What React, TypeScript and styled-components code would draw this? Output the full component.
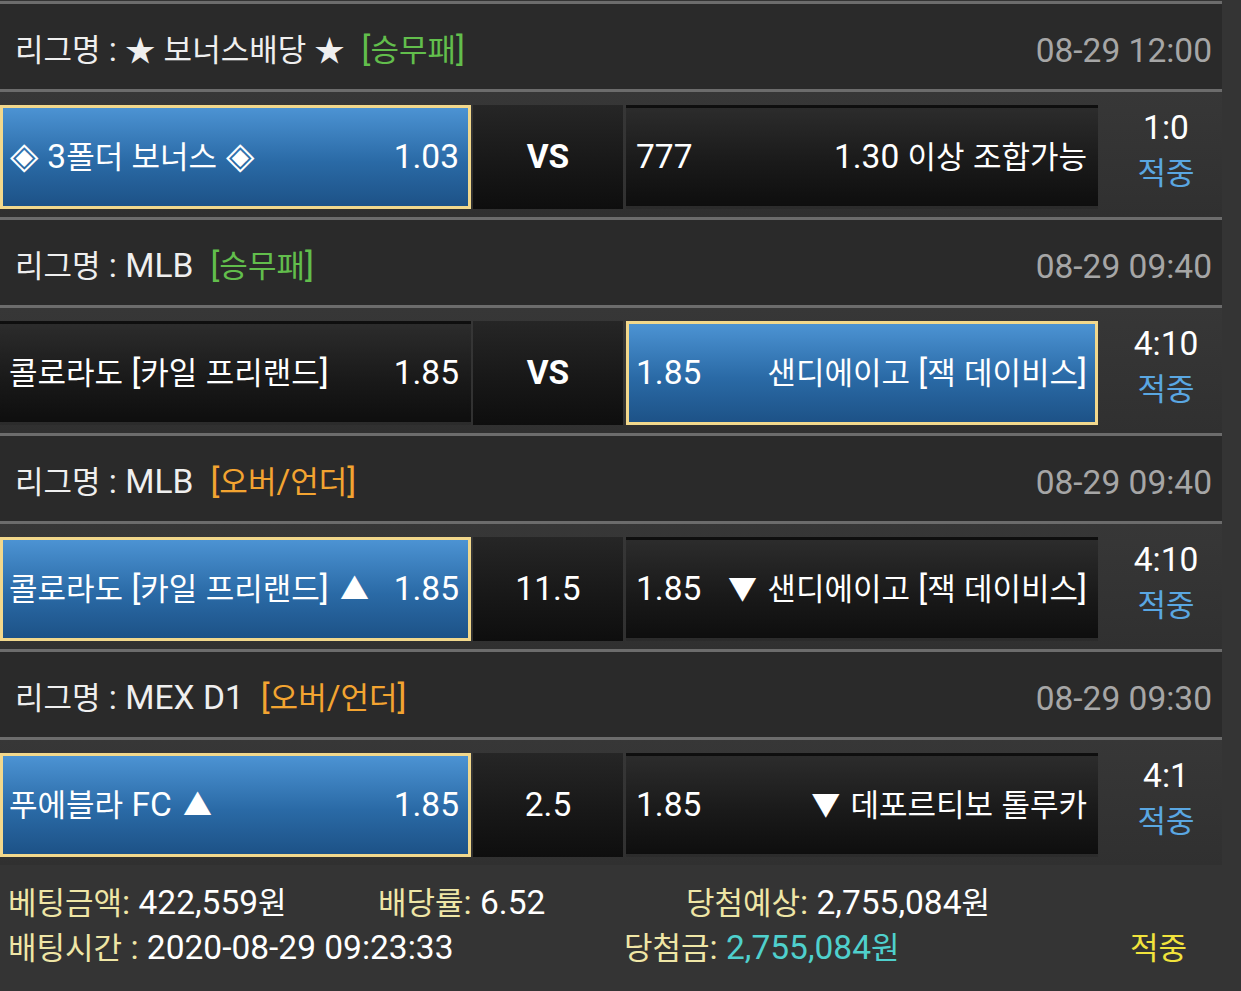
import React from "react";
import styled, { createGlobalStyle, css } from "styled-components";

const GlobalStyle = createGlobalStyle`
  html, body {
    margin: 0;
    padding: 0;
    background: #343434;
  }
  body {
    font-family: Roboto, "Noto Sans CJK KR", "Noto Sans", sans-serif;
    color: #f2f2f2;
  }
`;

const Page = styled.div`
  width: 1241px;
  min-height: 991px;
  padding-top: 1px;
  box-sizing: border-box;
  background: #343434;
`;

const List = styled.div`
  width: 1222px;
`;

const Divider = styled.div`
  height: 3px;
  background: #6c6c6c;
`;

/* Korean runs are set slightly smaller than the Latin / digit runs */
const Kr = styled.span`
  font-size: 31px;
`;

const Sym = styled.span<{ $size: number; $gap: number }>`
  font-size: ${(p) => p.$size}px;
  margin: 0 ${(p) => p.$gap}px;
`;

const symStyle: Record<string, { size: number; gap: number }> = {
  "◈": { size: 37, gap: 1 },
  "▲": { size: 29, gap: 3 },
  "▼": { size: 29, gap: 2 },
  "★": { size: 30, gap: 0 },
};

function Txt({ children }: { children: string }) {
  const parts = children
    .split(/([\uAC00-\uD7A3\u3131-\u318E]+|[◈▲▼★])/)
    .filter((p) => p !== "");
  return (
    <>
      {parts.map((p, i) => {
        if (/[\uAC00-\uD7A3\u3131-\u318E]/.test(p)) return <Kr key={i}>{p}</Kr>;
        const s = symStyle[p];
        if (s)
          return (
            <Sym key={i} $size={s.size} $gap={s.gap}>
              {p}
            </Sym>
          );
        return <React.Fragment key={i}>{p}</React.Fragment>;
      })}
    </>
  );
}

const LeagueHeader = styled.div`
  height: 85px;
  box-sizing: border-box;
  padding: 8px 10px 0 15px;
  background: #2a2a2a;
  display: flex;
  align-items: center;
  justify-content: space-between;
  font-size: 33.5px;
  line-height: 40px;
  color: #efefef;
  white-space: nowrap;
`;

const LeagueName = styled.span``;

const Market = styled.span<{ $tone: "green" | "orange" }>`
  margin-left: 17px;
  color: ${(p) => (p.$tone === "green" ? "#62be4c" : "#f3a431")};
`;

const Time = styled.span`
  color: #a6a6a6;
`;

const BetRow = styled.div`
  height: 125px;
  box-sizing: border-box;
  padding-top: 13px;
  display: flex;
  align-items: flex-start;
  background: linear-gradient(#373737, #303030);
`;

const cellBase = css`
  height: 104px;
  box-sizing: border-box;
  display: flex;
  align-items: center;
  font-size: 33.5px;
  line-height: 40px;
  color: #ffffff;
  white-space: nowrap;
`;

const Pick = styled.div<{ $selected?: boolean }>`
  ${cellBase};
  width: 471px;
  justify-content: space-between;
  padding: 0 8px 0 9px;
  border: 3px solid ${(p) => (p.$selected ? "#f2d88c" : "transparent")};
  background: ${(p) =>
    p.$selected
      ? "linear-gradient(#4c93d3, #2a6aa6 55%, #1d5287)"
      : "linear-gradient(#2c2c2c, #1a1a1a 55%, #0e0e0e)"};
`;

const HomePick = styled(Pick)`
  padding: 0 9px 0 6px;
`;

const AwayPick = styled(Pick)`
  width: 472px;
  padding: 0 8px 0 7px;
`;

const Middle = styled.div<{ $bold?: boolean }>`
  ${cellBase};
  width: 150px;
  margin: 0 3px 0 2px;
  justify-content: center;
  background: linear-gradient(#262626, #181818 55%, #0e0e0e);
  font-weight: ${(p) => (p.$bold ? 700 : 400)};
`;

const Result = styled.div`
  flex: 1;
  padding-left: 12px;
  display: flex;
  flex-direction: column;
  align-items: center;
  font-size: 33.5px;
  line-height: 45px;
`;

const Score = styled.span`
  color: #ffffff;
`;

const Hit = styled.span`
  color: #5aa7e2;
`;

const Summary = styled.div`
  padding: 16px 0 0 8px;
  font-size: 33.5px;
  line-height: 44px;
  white-space: nowrap;
`;

const SummaryLine = styled.div`
  display: flex;
`;

const SummaryItem = styled.div<{ $w?: number }>`
  ${(p) => (p.$w ? `width: ${p.$w}px;` : "")}
  flex-shrink: 0;
`;

const Label = styled.span`
  color: #efe6a6;
`;

const Value = styled.span<{ $tone?: "white" | "cyan" }>`
  color: ${(p) => (p.$tone === "cyan" ? "#4fd0cd" : "#ffffff")};
`;

const Status = styled.span`
  color: #f1e33c;
`;

type Bet = {
  league: string;
  market: string;
  tone: "green" | "orange";
  time: string;
  home: string;
  homeOdds: string;
  mid: string;
  midBold?: boolean;
  awayOdds: string;
  away: string;
  pick: "home" | "away";
  score: string;
};

const bets: Bet[] = [
  {
    league: "리그명 : ★ 보너스배당 ★",
    market: "[승무패]",
    tone: "green",
    time: "08-29 12:00",
    home: "◈ 3폴더 보너스 ◈",
    homeOdds: "1.03",
    mid: "VS",
    midBold: true,
    awayOdds: "777",
    away: "1.30 이상 조합가능",
    pick: "home",
    score: "1:0",
  },
  {
    league: "리그명 : MLB",
    market: "[승무패]",
    tone: "green",
    time: "08-29 09:40",
    home: "콜로라도 [카일 프리랜드]",
    homeOdds: "1.85",
    mid: "VS",
    midBold: true,
    awayOdds: "1.85",
    away: "샌디에이고 [잭 데이비스]",
    pick: "away",
    score: "4:10",
  },
  {
    league: "리그명 : MLB",
    market: "[오버/언더]",
    tone: "orange",
    time: "08-29 09:40",
    home: "콜로라도 [카일 프리랜드] ▲",
    homeOdds: "1.85",
    mid: "11.5",
    awayOdds: "1.85",
    away: "▼ 샌디에이고 [잭 데이비스]",
    pick: "home",
    score: "4:10",
  },
  {
    league: "리그명 : MEX D1",
    market: "[오버/언더]",
    tone: "orange",
    time: "08-29 09:30",
    home: "푸에블라 FC ▲",
    homeOdds: "1.85",
    mid: "2.5",
    awayOdds: "1.85",
    away: "▼ 데포르티보 톨루카",
    pick: "home",
    score: "4:1",
  },
];

export default function App() {
  return (
    <Page>
      <GlobalStyle />
      <List>
        {bets.map((b, i) => (
          <React.Fragment key={i}>
            <Divider />
            <LeagueHeader>
              <LeagueName>
                <Txt>{b.league}</Txt>
                <Market $tone={b.tone}>
                  <Txt>{b.market}</Txt>
                </Market>
              </LeagueName>
              <Time>{b.time}</Time>
            </LeagueHeader>
            <Divider />
            <BetRow>
              <HomePick $selected={b.pick === "home"}>
                <span>
                  <Txt>{b.home}</Txt>
                </span>
                <span>{b.homeOdds}</span>
              </HomePick>
              <Middle $bold={b.midBold}>{b.mid}</Middle>
              <AwayPick $selected={b.pick === "away"}>
                <span>{b.awayOdds}</span>
                <span>
                  <Txt>{b.away}</Txt>
                </span>
              </AwayPick>
              <Result>
                <Score>{b.score}</Score>
                <Hit>
                  <Txt>적중</Txt>
                </Hit>
              </Result>
            </BetRow>
          </React.Fragment>
        ))}
      </List>
      <Summary>
        <SummaryLine>
          <SummaryItem $w={370}>
            <Label>
              <Txt>베팅금액: </Txt>
            </Label>
            <Value>
              <Txt>422,559원</Txt>
            </Value>
          </SummaryItem>
          <SummaryItem $w={308}>
            <Label>
              <Txt>배당률: </Txt>
            </Label>
            <Value>6.52</Value>
          </SummaryItem>
          <SummaryItem>
            <Label>
              <Txt>당첨예상: </Txt>
            </Label>
            <Value>
              <Txt>2,755,084원</Txt>
            </Value>
          </SummaryItem>
        </SummaryLine>
        <SummaryLine>
          <SummaryItem $w={616}>
            <Label>
              <Txt>배팅시간 : </Txt>
            </Label>
            <Value>2020-08-29 09:23:33</Value>
          </SummaryItem>
          <SummaryItem $w={506}>
            <Label>
              <Txt>당첨금: </Txt>
            </Label>
            <Value $tone="cyan">
              <Txt>2,755,084원</Txt>
            </Value>
          </SummaryItem>
          <SummaryItem>
            <Status>
              <Txt>적중</Txt>
            </Status>
          </SummaryItem>
        </SummaryLine>
      </Summary>
    </Page>
  );
}
